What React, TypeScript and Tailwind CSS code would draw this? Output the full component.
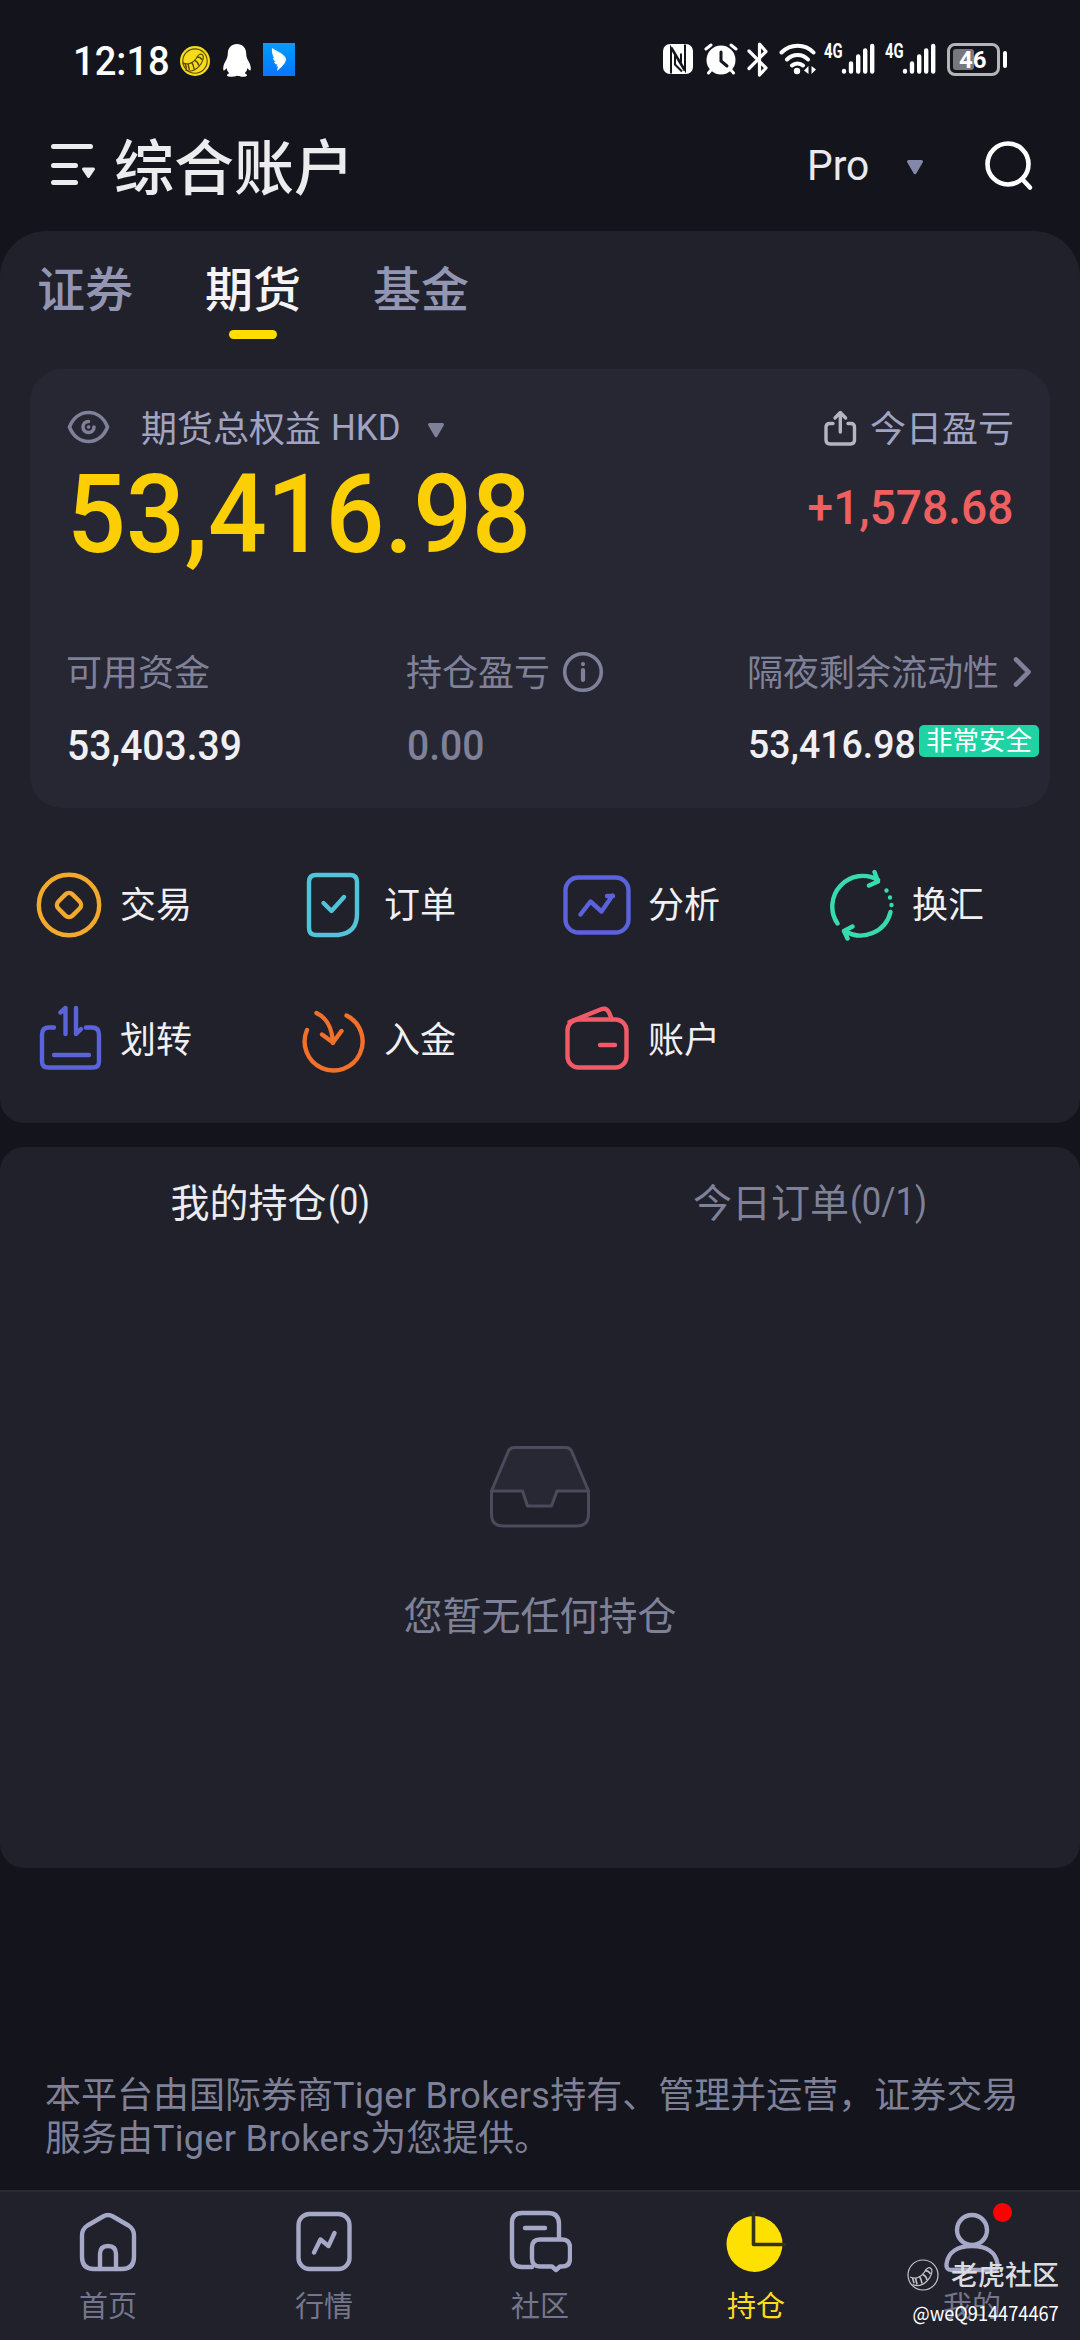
import React from "react";

const CJK = "font-['Noto_Sans_CJK_SC',sans-serif]";
const DIN = "font-[Roboto,'Noto_Sans_CJK_SC',sans-serif]";

function Triangle({ className = "" }: { className?: string }) {
  return (
    <svg className={`shrink-0 ${className}`} width="18" height="15" viewBox="0 0 18 15">
      <path d="M2.500 1.500h13L9 12.800z" fill="currentColor" stroke="currentColor" strokeWidth="3" strokeLinejoin="round" />
    </svg>
  );
}

function TigerMark({ size, stroke, fill = "none", className = "" }: { size: number; stroke: string; fill?: string; className?: string }) {
  return (
    <svg className={`shrink-0 ${className}`} width={size} height={size} viewBox="0 0 32 32" fill="none" stroke={stroke} strokeWidth="1.2">
      <circle cx="16" cy="16" r={fill === "none" ? 15 : 16} fill={fill} stroke={fill === "none" ? stroke : "none"} />
      {fill !== "none" && <circle cx="16" cy="16" r="13" />}
      <path d="M3 18c5 2.500 11 .5 14.500-5 1.500-3.500 4.500-5.500 6.500-3.500s.5 8-4 12.500-10 5.500-14.500 3.500" />
      <path d="M18 11.800q3.500-.3 5.500 3M15.500 15.500q3.500 1 4.500 5.500M12.500 17.500q2 3 2.500 7M8.500 19l1.500 6.500M5.500 18.800l1.500 5.500" strokeWidth="1.600" />
    </svg>
  );
}

function Signal() {
  return (
    <div className="flex">
      <span className="mt-[1px] h-[15px] w-[17px] origin-left scale-x-[.74] text-[20px] leading-[15px] font-bold text-white">4G</span>
      <svg width="34" height="32" viewBox="0 0 34 32" stroke="#fff" strokeWidth="4.400" strokeLinecap="round">
        <path d="M3 28.500v-.5M10 28.500v-8M17.200 28.500v-15M24.200 28.500v-21M31.200 28.500V3" />
      </svg>
    </div>
  );
}

function StatusBar() {
  return (
    <div className="flex h-[120px] items-start pt-[43px]">
      <span className={`${DIN} ml-[73px] mt-[-4px] h-[44px] w-[107px] origin-left scale-x-[.93] text-[41px] leading-[44px] font-medium text-white`}>12:18</span>
      <TigerMark size={30} stroke="#5b4a00" fill="#f7db1e" className="mt-[3px]" />
      <svg className="ml-[13px] mt-[1px]" width="28" height="33" viewBox="0 0 28 33" fill="#fff">
        <path d="M14 0C8.500 0 4.800 4 4.800 9.500c0 3-.8 5-2.500 8C.6 20.500-.2 24 .4 26.200c.6.8 2-.4 3.100-2.200.4 2.200 1.300 3.800 2.700 5.200-1.500.6-2.400 1.300-2.200 2.300.2 1 2 1.200 5 1.200 2.200 0 4-.4 5-.9 1 .5 2.800.9 5 .9 3 0 4.800-.2 5-1.200.2-1-.7-1.700-2.200-2.300 1.400-1.400 2.300-3 2.700-5.200 1.100 1.800 2.500 3 3.100 2.200.6-2.200-.2-5.700-1.900-8.700-1.700-3-2.500-5-2.500-8C23.200 4 19.500 0 14 0z" />
      </svg>
      <div className="ml-[12px] flex h-[33px] w-[32px] items-center justify-center bg-linear-to-b from-[#0a9df6] to-[#0a74ff]">
        <svg width="32" height="33" viewBox="0 0 32 33" fill="#fff">
          <path d="M9 5c4 3 10 4.500 13.500 9.500 1.200 2 .2 4-1.200 6.200L18.500 24l-4.500 4 1-4.500-2-.3 1.500-1.500c-2-.5-3-1.500-3.500-3l2 .2c-2-1.200-3-2.700-3.300-4.400l1.500.8C9.500 12.500 8.500 9 9 5z" />
        </svg>
      </div>
      <div className="ml-auto mr-[73px] flex items-start">
        <svg width="30" height="32" viewBox="0 0 30 32">
          <rect x="0" y="1" width="30" height="30" rx="7" fill="#fff" />
          <path d="M8 30.500V5l13.500 22.500M22 1.500V27L8.500 4.500M12 12.500v9l7 7M18 19.500v-9" fill="none" stroke="#14141d" strokeWidth="2" />
        </svg>
        <svg className="ml-[11px]" width="34" height="32" viewBox="0 0 34 32" fill="none" stroke="#fff" strokeLinecap="round">
          <circle cx="17" cy="17" r="14.500" fill="#fff" stroke="none" />
          <path d="M2 6l5-4M32 6l-5-4M7 27l-2.500 3M27 27l2.500 3" strokeWidth="3" />
          <path d="M17 9v9l6 5" stroke="#14141d" strokeWidth="3" />
        </svg>
        <svg className="ml-[9px] mt-[-1px]" width="22" height="35" viewBox="0 0 22 35" fill="none" stroke="#fff" strokeWidth="3.200" strokeLinecap="round" strokeLinejoin="round">
          <path d="M2 9l17 17-6.500 7V2L19 9.500 2 26.500" />
        </svg>
        <svg className="ml-[10px]" width="38" height="33" viewBox="0 0 38 33" fill="none" stroke="#fff" strokeWidth="4" strokeLinecap="round">
          <path d="M2.500 9.500c9-9 23.500-9 32 0M8 16.500c6-6 15.500-6 21 0M13 22.500c3-2.800 8-2.800 11 0" />
          <circle cx="18" cy="28" r="3.200" fill="#fff" stroke="none" />
          <path d="M25 27.500l4.500-4.500v8M32.500 23v8l4.500-4.500" fill="#fff" stroke="none" />
        </svg>
        <div className={`${DIN} ml-[7px] flex gap-[10px]`}><Signal /><Signal /></div>
        <div className="ml-[11px] flex h-[33px] w-[53px] rounded-[8px] border-[3px] border-[#b5b5b9] p-[3px]">
          <div className="flex h-[21px] w-[21px] rounded-[3px] bg-[#77777c]">
            <span className={`${DIN} ml-[6px] text-[24px] leading-[22px] font-bold text-white`}>46</span>
          </div>
        </div>
        <div className="ml-[3px] mt-[8px] h-[17px] w-[4px] rounded-full bg-white" />
      </div>
    </div>
  );
}

function Header() {
  return (
    <header className="flex h-[111px] items-start pt-[18px]">
      <svg className="ml-[51px] mt-[5px]" width="45" height="44" viewBox="0 0 45 44" fill="none" stroke="#ececef" strokeWidth="5" strokeLinecap="round">
        <path d="M2.500 3.500h37M2.500 22.500h22M2.500 39.500h22" />
        <path d="M32.500 26h10l-5 7.500z" fill="#ececef" strokeWidth="3" strokeLinejoin="round" />
      </svg>
      <h1 className={`${CJK} mt-[-3px] ml-[18px] text-[60px] leading-[58px] font-medium text-[#ececef]`}>综合账户</h1>
      <span className={`${DIN} ml-auto w-[66px] origin-left scale-x-[.97] text-[42px] leading-[56px] text-[#e9e9f0]`}>Pro</span>
      <Triangle className="ml-[33px] mt-[22px] text-[#8387a8]" />
      <svg className="mr-[46px] ml-[60px] mt-[3px]" width="50" height="52" viewBox="0 0 50 52" fill="none" stroke="#fff" strokeWidth="4.600" strokeLinecap="round">
        <circle cx="24" cy="23" r="20.500" />
        <path d="M39 39l7 7.500" />
      </svg>
    </header>
  );
}

function EquityCard() {
  return (
    <section className="mx-[30px] mt-[32px] h-[439px] rounded-[32px] bg-[#272733]">
      <div className="flex h-[60px] items-end">
        <svg className="mb-[-15px] ml-[37px] self-end" width="43" height="34" viewBox="0 0 43 34" fill="none" stroke="#7f8199" strokeWidth="3.600" strokeLinecap="round">
          <path d="M2.500 17C6 8 13 2.500 21.500 2.500S37 8 40.500 17C37 26 30 31.500 21.500 31.500S6 26 2.500 17z" />
          <path d="M21.500 11.500a5.500 5.500 0 1 0 5.500 5.500M21.500 17h.1" />
        </svg>
        <div className="mb-[-26px] flex flex-1 items-center text-[#a0a3c2]">
          <span className={`${CJK} mt-[-5px] ml-[31px] text-[36px] leading-[54px]`}>期货总权益</span>
          <span className={`${DIN} ml-[10px] w-[96px] origin-left scale-x-[.94] text-[37px] leading-[54px]`}>HKD</span>
          <Triangle className="mt-[4px] text-[#7f8199]" />
          <svg className="ml-auto" width="33" height="36" viewBox="0 0 33 36" fill="none" stroke="#b4b5c0" strokeWidth="3.400" strokeLinecap="round" strokeLinejoin="round">
            <path d="M9 13.500H5.500q-3.500 0-3.500 3.500v13q0 4 4 4h20.500q4 0 4-4V17q0-3.500-3.500-3.500H24M16.300 22V3M11 8l5.300-5.500L21.600 8" />
          </svg>
          <span className={`${CJK} mt-[-5px] mr-[36px] ml-[13px] text-[36px] leading-[54px]`}>今日盈亏</span>
        </div>
      </div>
      <div className="mt-[27px] flex h-[132px] items-start justify-between">
        <span className={`${DIN} origin-left scale-x-[.95] pl-[39px] text-[109px] leading-[118px] font-medium text-[#fbcf03]`}>53,416.98</span>
        <span className={`${DIN} mt-[24px] mr-[37px] origin-right scale-x-[.96] text-[48px] leading-[56px] font-medium text-[#ee5f60]`}>+1,578.68</span>
      </div>
      <div className={`${CJK} mt-[55px] grid grid-cols-[340px_341px_1fr] pl-[36px] text-[36px] leading-[54px] text-[#7f8199]`}>
        <span>可用资金</span>
        <span className="flex items-center">
          持仓盈亏
          <svg className="mt-[4px] ml-[12px]" width="42" height="42" viewBox="0 0 42 42" fill="none" stroke="#7f8199" strokeWidth="3.600" strokeLinecap="round">
            <circle cx="21" cy="21" r="18.300" />
            <path d="M21 19v10M21 13v.1" strokeWidth="4.200" />
          </svg>
        </span>
        <span className="flex items-center whitespace-nowrap">
          隔夜剩余流动性
          <svg className="mt-[4px] ml-[14px]" width="20" height="32" viewBox="0 0 20 32" fill="none" stroke="#7f8199" strokeWidth="4.600" strokeLinecap="round" strokeLinejoin="round">
            <path d="M3 3.500L15.500 16 3 28.500" />
          </svg>
        </span>
      </div>
      <div className={`${DIN} mt-[22px] grid grid-cols-[340px_341px_1fr] pl-[37px] text-[42px] leading-[54px] font-medium text-[#f0f0f4]`}>
        <span className="origin-left scale-x-[.93]">53,403.39</span>
        <span className="origin-left scale-x-[.93] text-[#7f8199]">0.00</span>
        <span className="flex">
          <span className="w-[171px] origin-left scale-x-[.96] text-[39px] leading-[52px]">53,416.98</span>
          <span className={`${CJK} mt-[6px] h-[32px] w-[120px] shrink-0 rounded-[5px] bg-[#1fd3a5] text-center text-[26.500px] leading-[28px] font-normal text-white`}>非常安全</span>
        </span>
      </div>
    </section>
  );
}

const actions: { label: string; color: string; icon: React.ReactNode }[] = [
  {
    label: "交易",
    color: "text-[#f3aa2c]",
    icon: (
      <>
        <circle cx="36" cy="36" r="30.200" />
        <rect x="26" y="26" width="20" height="20" rx="5" transform="rotate(45 36 36)" />
      </>
    ),
  },
  {
    label: "订单",
    color: "text-[#52c3d9]",
    icon: <path d="M19 6h34q7 0 7 7v32q0 19-19 21H19q-7 0-7-7V13q0-7 7-7zM26.500 34l8 8 12.500-14" />,
  },
  {
    label: "分析",
    color: "text-[#5a62dc]",
    icon: (
      <>
        <rect x="4.500" y="8.500" width="63" height="55" rx="13" />
        <path d="M19.500 45.500l10-13 11 10 11-16M46 27h6" />
      </>
    ),
  },
  {
    label: "换汇",
    color: "text-[#36dcb0]",
    icon: (
      <>
        <path d="M12.500 54.500A30.500 30.500 0 0 1 53 11M49.500 3l3.500 9.500-9 4M65.500 43A30.500 30.500 0 0 1 20 62M27.500 57.500l-8.500 4.500 3.500 7.500" />
        <path d="M61.500 21.500v.1M65 28.500v.1M66.500 36v.1" />
      </>
    ),
  },
  {
    label: "划转",
    color: "text-[#5a62dc]",
    icon: (
      <>
        <path d="M21 23.500H16q-7 0-7 7v27q0 6 6 6h45q6 0 6-6v-27q0-7-7-7h-6M21 51h35" />
        <path d="M27.500 8.500l5-4.500M32.500 4v26M43 4v26l5-5" />
      </>
    ),
  },
  {
    label: "入金",
    color: "text-[#f1702a]",
    icon: <path d="M10 26A29 29 0 1 0 49.500 11.500M19.500 9C30 14 35 23 36 39M25 30.500l11 8L44.500 27" />,
  },
  {
    label: "账户",
    color: "text-[#f25a68]",
    icon: (
      <>
        <rect x="6.500" y="15.500" width="59" height="48" rx="11" />
        <path d="M8.500 18l31-12.500q6-2.500 8.500 3L51 15.500M39 41h15" />
      </>
    ),
  },
];

function Actions() {
  return (
    <div className="mt-[29px] grid grid-cols-[repeat(4,264px)] auto-rows-[135px] pl-[33px]">
      {actions.map((a) => (
        <div key={a.label} className="flex h-[135px] items-center">
          <svg className={a.color} width="72" height="72" viewBox="0 0 72 72" fill="none" stroke="currentColor" strokeWidth="4.400" strokeLinecap="round" strokeLinejoin="round">
            {a.icon}
          </svg>
          <span className={`${CJK} mt-[-5px] ml-[15px] text-[36px] leading-[54px] text-[#f0f0f3]`}>{a.label}</span>
        </div>
      ))}
    </div>
  );
}

function Positions() {
  return (
    <section className={`${CJK} mt-[24px] flex h-[721px] flex-col items-center rounded-[24px] bg-[#21212b]`}>
      <div className="grid w-full grid-cols-2 pt-[26px] text-[39px] leading-[54px]">
        <span className="flex justify-center text-[#ececf0]">
          我的持仓<span className={`${DIN} ml-[1px] w-[42px] origin-left scale-x-[.88] text-[38px] leading-[58px]`}>(0)</span>
        </span>
        <span className="flex justify-center text-[#7f8199]">
          今日订单<span className={`${DIN} ml-[1px] w-[77px] origin-left scale-x-[.91] text-[38px] leading-[58px]`}>(0/1)</span>
        </span>
      </div>
      <svg className="mt-[214px]" width="102" height="84" viewBox="0 0 102 84" fill="none" stroke="#4b4b5e" strokeWidth="3" strokeLinejoin="round">
        <path d="M2.500 46L19 7q2-4.500 6-4.500h52q4 0 6 4.500l16.500 39H68l-5.500 15h-24L33.500 46z" fill="#272833" />
        <path d="M2.500 46v23q0 12 12 12h73q12 0 12-12V46" />
      </svg>
      <p className="mt-[55px] text-[39px] leading-[58px] text-[#7f8199]">您暂无任何持仓</p>
    </section>
  );
}

const tabs: { label: string; active?: boolean; icon: React.ReactNode }[] = [
  {
    label: "首页",
    icon: (
      <>
        <path d="M27 6.500q5-3 10 0l15.500 9q5.500 3.500 5.500 10V47q0 12-12 12H18Q6 59 6 47V25.500q0-6.500 5.500-10z" transform="translate(0 1)" />
        <path d="M24 60V45q0-8 8-8t8 8v15" />
      </>
    ),
  },
  {
    label: "行情",
    icon: (
      <>
        <rect x="6.500" y="5" width="51" height="55" rx="11" />
        <path d="M22 43.500l6.500-13 8 6.500 6-13" />
      </>
    ),
  },
  {
    label: "社区",
    icon: (
      <>
        <path d="M24 58H14Q4 58 4 48V14Q4 4 14 4h26q11 0 11 11v14M17 19h20" />
        <path d="M34 30.500h20q8 0 8 8v11q0 8-8 8h-2l-4 3.500-4-3.500H32q-8 0-8-8v-11q0-8 8-8z" />
      </>
    ),
  },
  {
    label: "持仓",
    active: true,
    icon: (
      <>
        <circle cx="30.500" cy="35" r="28" fill="#fee100" stroke="none" />
        <path d="M29.500 4v31.500h31" stroke="#32351c" strokeWidth="3.600" />
      </>
    ),
  },
  {
    label: "我的",
    icon: (
      <>
        <circle cx="32" cy="21" r="15" />
        <path d="M32 37c14 0 24 6 25.500 18 .4 4-1 6-5 6h-41c-4 0-5.400-2-5-6C8 43 18 37 32 37z" />
      </>
    ),
  },
];

function BottomNav() {
  return (
    <nav className={`${CJK} relative grid h-[150px] grid-cols-5 border-t-2 border-[#2a2a33] bg-[#21212b]`}>
      {tabs.map((t) => (
        <div key={t.label} className="flex flex-col items-center pt-[17px]">
          <svg width="64" height="66" viewBox="0 0 64 66" fill="none" stroke="#a5a8c6" strokeWidth="4.400" strokeLinecap="round" strokeLinejoin="round">
            {t.icon}
          </svg>
          <span className={`mt-[8px] text-[29px] leading-[42px] ${t.active ? "text-[#fbdc1c]" : "text-[#74768d]"}`}>{t.label}</span>
        </div>
      ))}
      <div className="absolute top-[11px] right-[68px] size-[19px] rounded-full bg-[#ff0000]" />
      <div className="absolute top-[64px] right-[21px] flex flex-col items-end text-white">
        <div className="flex items-center">
          <TigerMark size={32} stroke="#c4c4c8" />
          <span className="mt-[-2px] ml-[12px] text-[27px] leading-[40px] font-medium text-[#dcdce0]">老虎社区</span>
        </div>
        <span className="origin-right scale-x-[.91] text-[20px] leading-[38px]">@weQ914474467</span>
      </div>
    </nav>
  );
}

export default function App() {
  return (
    <div className="flex h-[2340px] w-[1080px] flex-col overflow-hidden bg-[#14141d]">
      <StatusBar />
      <Header />
      <section className="h-[892px] shrink-0 rounded-t-[46px] rounded-b-[24px] bg-[#21212b]">
        <div className={`${CJK} flex gap-[72px] pt-[20px] pl-[37px] text-[48px] leading-[70px] font-medium text-[#9396b3]`}>
          <span>证券</span>
          <span className="flex flex-col items-center text-[#f4f4f6]">
            期货
            <span className="mt-[9px] h-[9px] w-[48px] rounded-full bg-[#ffdf00]" />
          </span>
          <span>基金</span>
        </div>
        <div className="-mt-[2px]">
          <EquityCard />
        </div>
        <Actions />
      </section>
      <Positions />
      <footer className={`${DIN} mt-auto mb-[29px] pl-[45px] text-[36px] leading-[43px] text-[#7f8199]`}>
        本平台由国际券商<span className="tracking-[.3px]">Tiger Brokers</span>持有、管理并运营，证券交易<br />服务由<span className="tracking-[.3px]">Tiger Brokers</span>为您提供。
      </footer>
      <BottomNav />
    </div>
  );
}
